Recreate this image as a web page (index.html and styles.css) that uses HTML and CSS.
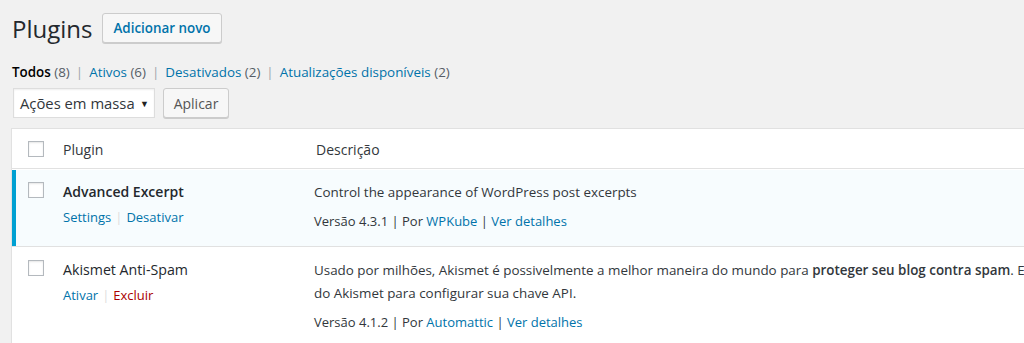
FILE: index.html
```html
<!DOCTYPE html>
<html lang="pt-BR">
<head>
<meta charset="utf-8">
<title>Plugins</title>
<link rel="stylesheet" href="styles.css">
</head>
<body>
<div class="wrap">
  <div class="page-head">
    <h1 class="title">Plugins</h1>
    <a class="btn btn-add" href="#">Adicionar novo</a>
  </div>
  <ul class="subsubsub">
    <li><span class="current">Todos</span> <span class="count">(8)</span></li>
    <li class="sep">|</li>
    <li><a href="#">Ativos <span class="count">(6)</span></a></li>
    <li class="sep">|</li>
    <li><a href="#">Desativados <span class="count">(2)</span></a></li>
    <li class="sep">|</li>
    <li><a href="#">Atualizações disponíveis <span class="count">(2)</span></a></li>
  </ul>
  <div class="tablenav">
    <div class="select">Ações em massa <span class="caret">▼</span></div>
    <button class="btn btn-apply">Aplicar</button>
  </div>
  <div class="table">
    <div class="row head">
      <div class="cb"><span class="box"></span></div>
      <div class="col-name">Plugin</div>
      <div class="col-desc">Descrição</div>
    </div>
    <div class="row active">
      <div class="cb"><span class="box"></span></div>
      <div class="col-name">
        <div class="pname strong">Advanced Excerpt</div>
        <div class="actions"><a href="#">Settings</a><span class="bar">|</span><a href="#">Desativar</a></div>
      </div>
      <div class="col-desc">
        <p class="desc">Control the appearance of WordPress post excerpts</p>
        <p class="meta">Versão 4.3.1 | Por <a href="#">WPKube</a> | <a href="#">Ver detalhes</a></p>
      </div>
    </div>
    <div class="row">
      <div class="cb"><span class="box"></span></div>
      <div class="col-name">
        <div class="pname">Akismet Anti-Spam</div>
        <div class="actions"><a href="#">Ativar</a><span class="bar">|</span><a class="delete" href="#">Excluir</a></div>
      </div>
      <div class="col-desc">
        <p class="desc">Usado por milhões, Akismet é possivelmente a melhor maneira do mundo para <strong>proteger seu blog contra spam</strong>. Ele mantém seu site protegido mesmo enquanto você dorme. Para começar: ative o plugin e vá para a página de configurações<br>do Akismet para configurar sua chave API.</p>
        <p class="meta">Versão 4.1.2 | Por <a href="#">Automattic</a> | <a href="#">Ver detalhes</a></p>
      </div>
    </div>
  </div>
</div>
</body>
</html>
```
FILE: styles.css
```css
html, body {
  margin: 0;
  padding: 0;
  background: #f1f1f1;
  overflow: hidden;
}
body {
  font-family: "Open Sans", "Noto Sans", sans-serif;
  font-size: 13px;
  color: #32373c;
  width: 1024px;
  height: 343px;
}
a { color: #0073aa; text-decoration: none; }
.wrap {
  padding: 10px 0 0 11px;
}
.page-head {
  display: flex;
  align-items: center;
  gap: 10px;
  height: 36px;
  padding-left: 1px;
}
.title {
  margin: 0;
  font-size: 24px;
  font-weight: 400;
  color: #23282d;
  line-height: 29px;
}
.btn {
  display: inline-flex;
  align-items: center;
  box-sizing: border-box;
  height: 30px;
  border: 1px solid #ccc;
  border-radius: 3px;
  background: #f7f7f7;
  box-shadow: 0 1px 0 #ccc;
  font-family: inherit;
  font-size: 13px;
}
.btn-add {
  padding: 0 10px;
  font-weight: 600;
  font-size: 13.4px;
  color: #0073aa;
}
.subsubsub {
  list-style: none;
  display: flex;
  gap: 6px;
  margin: 16px 0 0 1px;
  padding: 0;
  line-height: 20px;
  font-size: 13.4px;
  color: #666;
}
.subsubsub .current { color: #000; font-weight: 600; }
.subsubsub .count { color: #555d66; }
.sep { color: #a0a5aa; }
.tablenav {
  display: flex;
  gap: 8px;
  margin-top: 6px;
  padding-left: 2px;
  height: 30px;
}
.select {
  box-sizing: border-box;
  width: 142px;
  height: 30px;
  background: #fff;
  border: 1px solid #ddd;
  box-shadow: inset 0 1px 2px rgba(0,0,0,.07);
  display: flex;
  align-items: center;
  justify-content: space-between;
  padding: 0 5px 0 6px;
  color: #32373c;
  font-size: 14.8px;
}
.caret { font-size: 9px; color: #222; }
.btn-apply {
  padding: 0 10px;
  color: #555;
  font-size: 14px;
  width: 66px;
  justify-content: center;
}
.table {
  margin-top: 10px;
  width: 1300px;
  background: #fff;
  border: 1px solid #e1e1e1;
  border-right: 0;
  box-shadow: 0 1px 1px rgba(0,0,0,.04);
}
.row {
  display: grid;
  grid-template-columns: 41px 252px 1fr;
  border-bottom: 1px solid #e1e1e1;
  position: relative;
}
.row.head {
  height: 39px;
  align-items: center;
  font-size: 14px;
  color: #32373c;
}
.row.active {
  background: #f7fcfe;
  box-shadow: inset 4px 0 0 #00a0d2;
  height: 76px;
  margin-top: 1px;
}
.row + .row:not(.active) {
  margin-top: 1px;
  height: 96px;
  border-bottom: 0;
}
.cb {
  display: flex;
  justify-content: flex-end;
}
.row:not(.head) .cb { padding-top: 12px; align-items: flex-start; }
.box {
  display: block;
  width: 16px;
  height: 16px;
  box-sizing: border-box;
  border: 1px solid #b4b9be;
  background: #fff;
  box-shadow: inset 0 1px 2px rgba(0,0,0,.1);
  margin-right: 9px;
}
.head .col-name { padding: 1px 0 0 10px; }
.head .col-desc { padding: 1px 0 0 11px; }
.row:not(.head) .col-name { padding: 12px 0 0 10px; }
.row:not(.head) .col-desc { padding: 11px 0 0 9px; }
.pname {
  font-size: 14.2px;
  line-height: 20px;
  color: #23282d;
}
.pname.strong { font-weight: 600; font-size: 14px; }
.actions {
  margin-top: 5px;
  line-height: 20px;
  font-size: 13px;
}
.actions .bar { color: #ddd; margin: 0 4px; }
.actions .delete { color: #a00; }
.desc {
  margin: 0;
  font-size: 13.4px;
  line-height: 23px;
  white-space: nowrap;
  color: #32373c;
}
.desc strong { font-weight: 600; }
.meta {
  margin: 6px 0 0;
  line-height: 23px;
  color: #32373c;
}
```
